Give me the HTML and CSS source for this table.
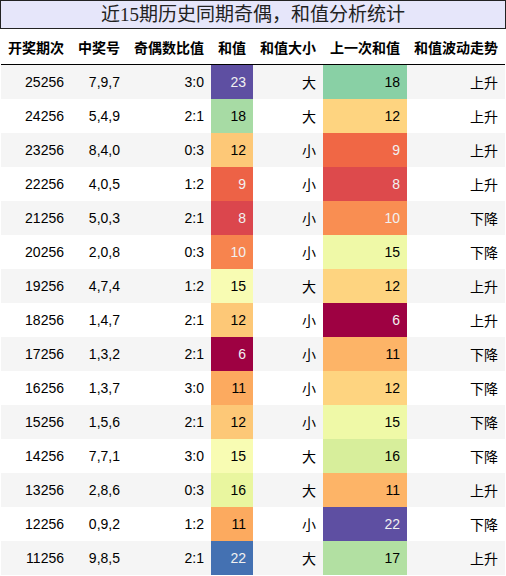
FILE: index.html
```html
<!DOCTYPE html>
<html lang="zh">
<head>
    <meta charset="UTF-8">
    <title>近15期历史同期奇偶，和值分析统计</title>
    <link rel="stylesheet" href="styles.css">
</head>
<body>

    <div class="title">近15期历史同期奇偶，和值分析统计</div>

    <table class="stats">
        <thead>
            <tr>
                <th>开奖期次</th>
                <th>中奖号</th>
                <th>奇偶数比值</th>
                <th>和值</th>
                <th>和值大小</th>
                <th>上一次和值</th>
                <th>和值波动走势</th>
            </tr>
        </thead>
        <tbody>
            <tr><td>25256</td><td>7,9,7</td><td>3:0</td><td class="v23 light">23</td><td>大</td><td class="p18">18</td><td>上升</td></tr>
            <tr><td>24256</td><td>5,4,9</td><td>2:1</td><td class="v18">18</td><td>大</td><td class="p12">12</td><td>上升</td></tr>
            <tr><td>23256</td><td>8,4,0</td><td>0:3</td><td class="v12">12</td><td>小</td><td class="p9 light">9</td><td>上升</td></tr>
            <tr><td>22256</td><td>4,0,5</td><td>1:2</td><td class="v9 light">9</td><td>小</td><td class="p8 light">8</td><td>上升</td></tr>
            <tr><td>21256</td><td>5,0,3</td><td>2:1</td><td class="v8 light">8</td><td>小</td><td class="p10 light">10</td><td>下降</td></tr>
            <tr><td>20256</td><td>2,0,8</td><td>0:3</td><td class="v10 light">10</td><td>小</td><td class="p15">15</td><td>下降</td></tr>
            <tr><td>19256</td><td>4,7,4</td><td>1:2</td><td class="v15">15</td><td>大</td><td class="p12">12</td><td>上升</td></tr>
            <tr><td>18256</td><td>1,4,7</td><td>2:1</td><td class="v12">12</td><td>小</td><td class="p6 light">6</td><td>上升</td></tr>
            <tr><td>17256</td><td>1,3,2</td><td>2:1</td><td class="v6 light">6</td><td>小</td><td class="p11">11</td><td>下降</td></tr>
            <tr><td>16256</td><td>1,3,7</td><td>3:0</td><td class="v11">11</td><td>小</td><td class="p12">12</td><td>下降</td></tr>
            <tr><td>15256</td><td>1,5,6</td><td>2:1</td><td class="v12">12</td><td>小</td><td class="p15">15</td><td>下降</td></tr>
            <tr><td>14256</td><td>7,7,1</td><td>3:0</td><td class="v15">15</td><td>大</td><td class="p16">16</td><td>下降</td></tr>
            <tr><td>13256</td><td>2,8,6</td><td>0:3</td><td class="v16">16</td><td>大</td><td class="p11">11</td><td>上升</td></tr>
            <tr><td>12256</td><td>0,9,2</td><td>1:2</td><td class="v11">11</td><td>小</td><td class="p22 light">22</td><td>下降</td></tr>
            <tr><td>11256</td><td>9,8,5</td><td>2:1</td><td class="v22 light">22</td><td>大</td><td class="p17">17</td><td>上升</td></tr>
        </tbody>
    </table>

</body>
</html>
```

FILE: styles.css
```css
body {
    margin: 0;
    padding: 0;
    background: #fff;
    color: #000;
    font-family: "Liberation Sans", "Noto Sans CJK SC", sans-serif;
    width: 506px;
}
.title {
    box-sizing: border-box;
    height: 29px;
    border: 1px solid #222;
    background-color: #e6e6fa;
    color: #222;
    font-family: "Liberation Serif", "Noto Sans CJK SC", serif;
    font-size: 19px;
    line-height: 27px;
    text-align: center;
}
.stats {
    border-collapse: collapse;
    margin: 0 1px;
    width: 504px;
    font-size: 14px;
}
.stats th {
    height: 35px;
    padding: 0 7px;
    font-weight: bold;
    text-align: right;
    white-space: nowrap;
    border-bottom: 1px solid #000;
}
.stats td {
    height: 34px;
    padding: 0 7px;
    text-align: right;
    white-space: nowrap;
}
.stats tbody tr:nth-child(odd) {
    background-color: #f5f5f5;
}
.light {
    color: #f1f1f1;
}

/* 和值 (6 - 23) */
.v23 { background-color: #5e4fa2; }
.v22 { background-color: #4471b2; }
.v18 { background-color: #a7dba4; }
.v16 { background-color: #e9f69f; }
.v15 { background-color: #f8fcb3; }
.v12 { background-color: #fdc877; }
.v11 { background-color: #fcaa5f; }
.v10 { background-color: #f7844e; }
.v9 { background-color: #ed6246; }
.v8 { background-color: #db464d; }
.v6 { background-color: #9e0142; }

/* 上一次和值 (6 - 22) */
.p22 { background-color: #5e4fa2; }
.p18 { background-color: #89d0a5; }
.p17 { background-color: #b2e0a2; }
.p16 { background-color: #d7ee9b; }
.p15 { background-color: #eff9a7; }
.p12 { background-color: #fed480; }
.p11 { background-color: #fdb467; }
.p10 { background-color: #f98e52; }
.p9 { background-color: #f06745; }
.p8 { background-color: #dd4a4c; }
.p6 { background-color: #9e0142; }
```
